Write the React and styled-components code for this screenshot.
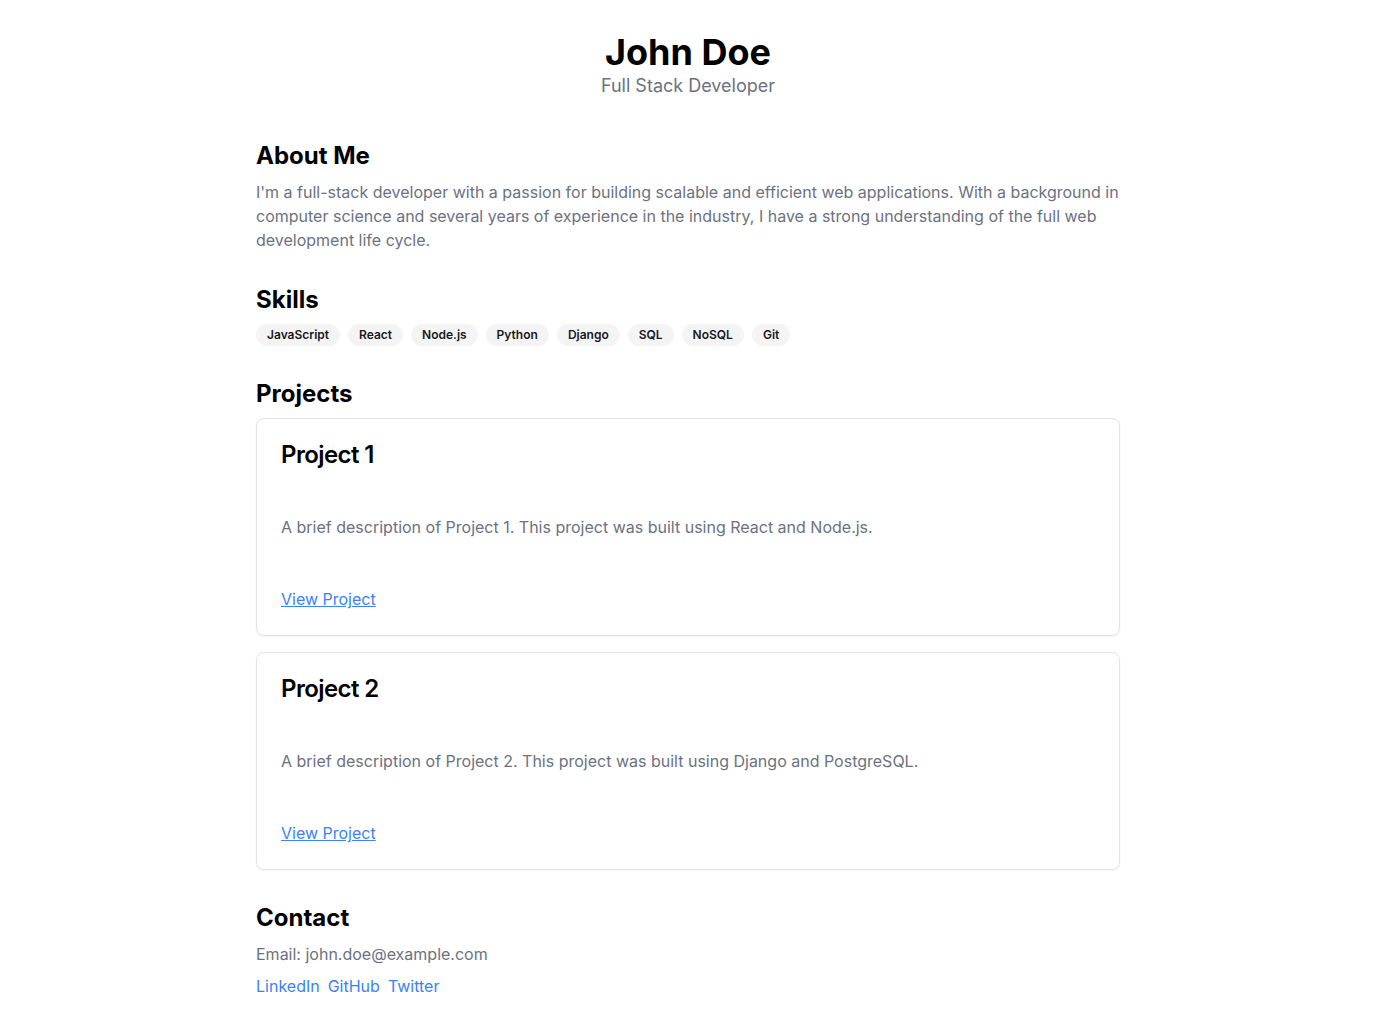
import React from "react";
import styled, { createGlobalStyle } from "styled-components";

const Global = createGlobalStyle`
  * { box-sizing: border-box; }
  body {
    margin: 0;
    background: #ffffff;
    font-family: Inter, "Noto Sans", sans-serif;
    color: #09090b;
  }
`;

const Page = styled.main`
  max-width: 896px;
  margin: 0 auto;
  padding: 32px 16px;
`;

const Header = styled.header`
  text-align: center;
  margin-bottom: 40px;
`;

const Name = styled.h1`
  margin: 0;
  font-size: 36px;
  line-height: 40px;
  font-weight: 700;
  color: #000;
`;

const Role = styled.p`
  margin: 0;
  font-size: 18px;
  line-height: 28px;
  color: #6b7280;
`;

const Section = styled.section`
  margin-bottom: 32px;
`;

const Heading = styled.h2`
  margin: 0 0 8px;
  font-size: 24px;
  line-height: 32px;
  font-weight: 700;
  color: #000;
`;

const Text = styled.p`
  margin: 0 0 ${(p) => (p.$gap ? "8px" : "0")};
  font-size: 16px;
  line-height: 24px;
  color: #6b7280;
`;

const Badges = styled.div`
  display: flex;
  flex-wrap: wrap;
  gap: 8px;
`;

const Badge = styled.span`
  display: inline-flex;
  align-items: center;
  border: 1px solid transparent;
  border-radius: 9999px;
  background: #f4f4f5;
  color: #18181b;
  padding: 2px 10px;
  font-size: 12px;
  line-height: 16px;
  font-weight: 600;
`;

const Cards = styled.div`
  display: flex;
  flex-direction: column;
  gap: 16px;
`;

const Card = styled.div`
  border: 1px solid #e4e4e7;
  border-radius: 8px;
  background: #fff;
  box-shadow: 0 1px 2px 0 rgba(0, 0, 0, 0.05);
`;

const CardPart = styled.div`
  padding: 24px;
`;

const CardTitle = styled.h3`
  margin: 0;
  font-size: 24px;
  line-height: 24px;
  font-weight: 600;
  letter-spacing: -0.6px;
  color: #000;
`;

const Link = styled.a`
  color: #3b82f6;
  font-size: 16px;
  line-height: 24px;
  text-decoration: ${(p) => (p.$underline ? "underline" : "none")};
`;

const LinkRow = styled.div`
  display: flex;
  gap: 8px;
`;

const skills = ["JavaScript", "React", "Node.js", "Python", "Django", "SQL", "NoSQL", "Git"];

const projects = [
  {
    title: "Project 1",
    desc: "A brief description of Project 1. This project was built using React and Node.js.",
  },
  {
    title: "Project 2",
    desc: "A brief description of Project 2. This project was built using Django and PostgreSQL.",
  },
];

export default function App() {
  return (
    <>
      <Global />
      <Page>
        <Header>
          <Name>John Doe</Name>
          <Role>Full Stack Developer</Role>
        </Header>

        <Section>
          <Heading>About Me</Heading>
          <Text>
            I'm a full-stack developer with a passion for building scalable and efficient web
            applications. With a background in computer science and several years of experience in
            the industry, I have a strong understanding of the full web development life cycle.
          </Text>
        </Section>

        <Section>
          <Heading>Skills</Heading>
          <Badges>
            {skills.map((s) => (
              <Badge key={s}>{s}</Badge>
            ))}
          </Badges>
        </Section>

        <Section>
          <Heading>Projects</Heading>
          <Cards>
            {projects.map((p) => (
              <Card key={p.title}>
                <CardPart>
                  <CardTitle>{p.title}</CardTitle>
                </CardPart>
                <CardPart>
                  <Text>{p.desc}</Text>
                </CardPart>
                <CardPart>
                  <Link href="#" $underline>
                    View Project
                  </Link>
                </CardPart>
              </Card>
            ))}
          </Cards>
        </Section>

        <Section>
          <Heading>Contact</Heading>
          <Text $gap>Email: john.doe@example.com</Text>
          <LinkRow>
            <Link href="#">LinkedIn</Link>
            <Link href="#">GitHub</Link>
            <Link href="#">Twitter</Link>
          </LinkRow>
        </Section>
      </Page>
    </>
  );
}
